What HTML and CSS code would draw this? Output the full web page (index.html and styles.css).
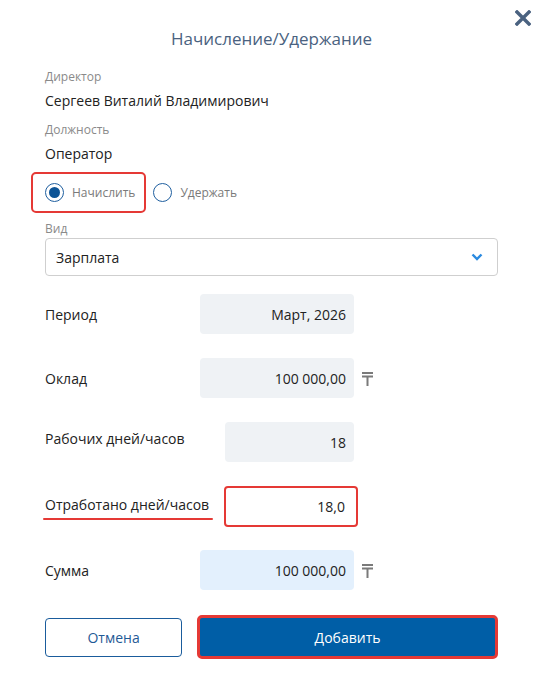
FILE: index.html
```html
<!DOCTYPE html>
<html lang="ru">
<head>
<meta charset="utf-8">
<link rel="stylesheet" href="styles.css">
</head>
<body>
<div class="dialog">
  <button class="close" aria-label="Закрыть">
    <svg width="16" height="16" viewBox="0 0 16 16"><path d="M2 2 L14 14 M14 2 L2 14" stroke="#4a6280" stroke-width="3.4" stroke-linecap="square"/></svg>
  </button>
  <h1 class="title">Начисление/Удержание</h1>

  <div class="field-label first">Директор</div>
  <div class="field-value">Сергеев Виталий Владимирович</div>
  <div class="field-label second">Должность</div>
  <div class="field-value">Оператор</div>

  <div class="radios">
    <label class="radio highlighted"><span class="circle checked"></span><span class="radio-text">Начислить</span></label>
    <label class="radio"><span class="circle"></span><span class="radio-text">Удержать</span></label>
  </div>

  <div class="field-label kind">Вид</div>
  <div class="select">
    <span>Зарплата</span>
    <svg width="12" height="8" viewBox="0 0 12 8"><path d="M1.5 1.5 L6 6 L10.5 1.5" fill="none" stroke="#2a8ae0" stroke-width="2.4"/></svg>
  </div>

  <div class="rows">
    <div class="row">
      <div class="row-label">Период</div>
      <div class="box grey">Март, 2026</div>
    </div>
    <div class="row">
      <div class="row-label">Оклад</div>
      <div class="box grey">100 000,00</div>
      <svg class="currency" width="11" height="14" viewBox="0 0 11 14" aria-label="₸"><path d="M0 1 H11 M0 4.5 H11 M5.5 4.5 V14" fill="none" stroke="#7a7a7a" stroke-width="2"/></svg>
    </div>
    <div class="row">
      <div class="row-label wide up">Рабочих дней/часов</div>
      <div class="box grey short">18</div>
    </div>
    <div class="row">
      <div class="row-label wide underlined">Отработано дней/часов</div>
      <div class="box edit">18,0</div>
    </div>
    <div class="row">
      <div class="row-label">Сумма</div>
      <div class="box blue">100 000,00</div>
      <svg class="currency" width="11" height="14" viewBox="0 0 11 14" aria-label="₸"><path d="M0 1 H11 M0 4.5 H11 M5.5 4.5 V14" fill="none" stroke="#7a7a7a" stroke-width="2"/></svg>
    </div>
  </div>

  <div class="actions">
    <button class="btn cancel">Отмена</button>
    <button class="btn primary">Добавить</button>
  </div>
</div>
</body>
</html>
```

FILE: styles.css
```css
html, body {
  margin: 0;
  padding: 0;
  background: #fff;
}
body {
  font-family: "Open Sans", "Noto Sans", sans-serif;
  color: #222;
  width: 541px;
  height: 690px;
  overflow: hidden;
}
.dialog {
  position: relative;
  padding: 0 43px 0 45px;
  display: flex;
  flex-direction: column;
}
.close {
  position: absolute;
  top: 10px;
  right: 10px;
  width: 16px;
  height: 16px;
  padding: 0;
  border: 0;
  background: none;
  display: block;
}
.close svg { display: block; }
.title {
  margin: 28px 0 0;
  font-size: 17px;
  line-height: 22px;
  font-weight: 400;
  color: #4a6280;
  text-align: center;
}
.field-label {
  font-size: 12px;
  line-height: 16px;
  color: #8a8a8a;
}
.field-label.first { margin-top: 19px; }
.field-label.second { margin-top: 11px; }
.field-label.kind { margin-top: 8px; }
.field-value {
  margin-top: 6px;
  font-size: 14px;
  line-height: 20px;
  color: #222;
}
.radios {
  margin: 8px 0 0 -14px;
  display: flex;
  align-items: center;
}
.radio {
  display: flex;
  align-items: center;
  gap: 8px;
  height: 41px;
  box-sizing: border-box;
  border: 2px solid transparent;
  border-radius: 5px;
  padding: 0 10px 0 12px;
}
.radio + .radio { padding-left: 5px; }
.radio.highlighted { border-color: #e53935; padding-right: 9px; }
.circle {
  width: 19px;
  height: 19px;
  box-sizing: border-box;
  border: 1.6px solid #1f5f9f;
  border-radius: 50%;
  display: flex;
  align-items: center;
  justify-content: center;
}
.circle.checked::after {
  content: "";
  width: 11px;
  height: 11px;
  border-radius: 50%;
  background: #0d5496;
}
.radio-text {
  font-size: 12px;
  color: #7a7a7a;
}
.select {
  margin-top: 1px;
  height: 38px;
  box-sizing: border-box;
  border: 1px solid #cfcfcf;
  border-radius: 4px;
  display: flex;
  align-items: center;
  justify-content: space-between;
  padding: 0 14px 0 10px;
  font-size: 14px;
  color: #222;
}
.select svg { display: block; }
.rows {
  margin-top: 18px;
  display: flex;
  flex-direction: column;
  gap: 24px;
}
.row {
  display: flex;
  align-items: center;
  height: 40px;
}
.row-label {
  width: 155px;
  font-size: 14px;
  color: #222;
}
.row-label.wide { width: 180px; }
.row-label.up { position: relative; top: -4px; }
.row-label.underlined {
  position: relative;
  top: -2px;
}
.row-label.underlined::after {
  content: "";
  position: absolute;
  left: -2px;
  width: 170px;
  bottom: -6px;
  height: 2px;
  border-radius: 1px;
  background: #e53935;
}
.box {
  width: 154px;
  height: 40px;
  box-sizing: border-box;
  border-radius: 4px;
  display: flex;
  align-items: center;
  justify-content: flex-end;
  padding-right: 8px;
  font-size: 14px;
  color: #222;
}
.box.grey { background: #eff2f5; }
.box.short { width: 129px; }
.box.blue { background: #e3f0fd; }
.box.edit {
  width: 134px;
  height: 41px;
  border: 2px solid #e53935;
  margin-left: -1px;
  padding-right: 11px;
  background: #fff;
}
.currency {
  margin-left: 8px;
  display: block;
  position: relative;
  top: 1px;
}
.actions {
  margin-top: 25px;
  display: flex;
  align-items: center;
  gap: 15px;
}
.btn {
  font-family: "Open Sans", "Noto Sans", sans-serif;
  font-size: 14px;
  border-radius: 4px;
  cursor: pointer;
}
.cancel {
  width: 138px;
  height: 39px;
  background: #fff;
  border: 1px solid #1a5c9c;
  color: #1f5a96;
}
.primary {
  width: 303px;
  height: 44px;
  background: #005ea6;
  border: 3px solid #e53935;
  border-radius: 5px;
  color: #fff;
}
```
